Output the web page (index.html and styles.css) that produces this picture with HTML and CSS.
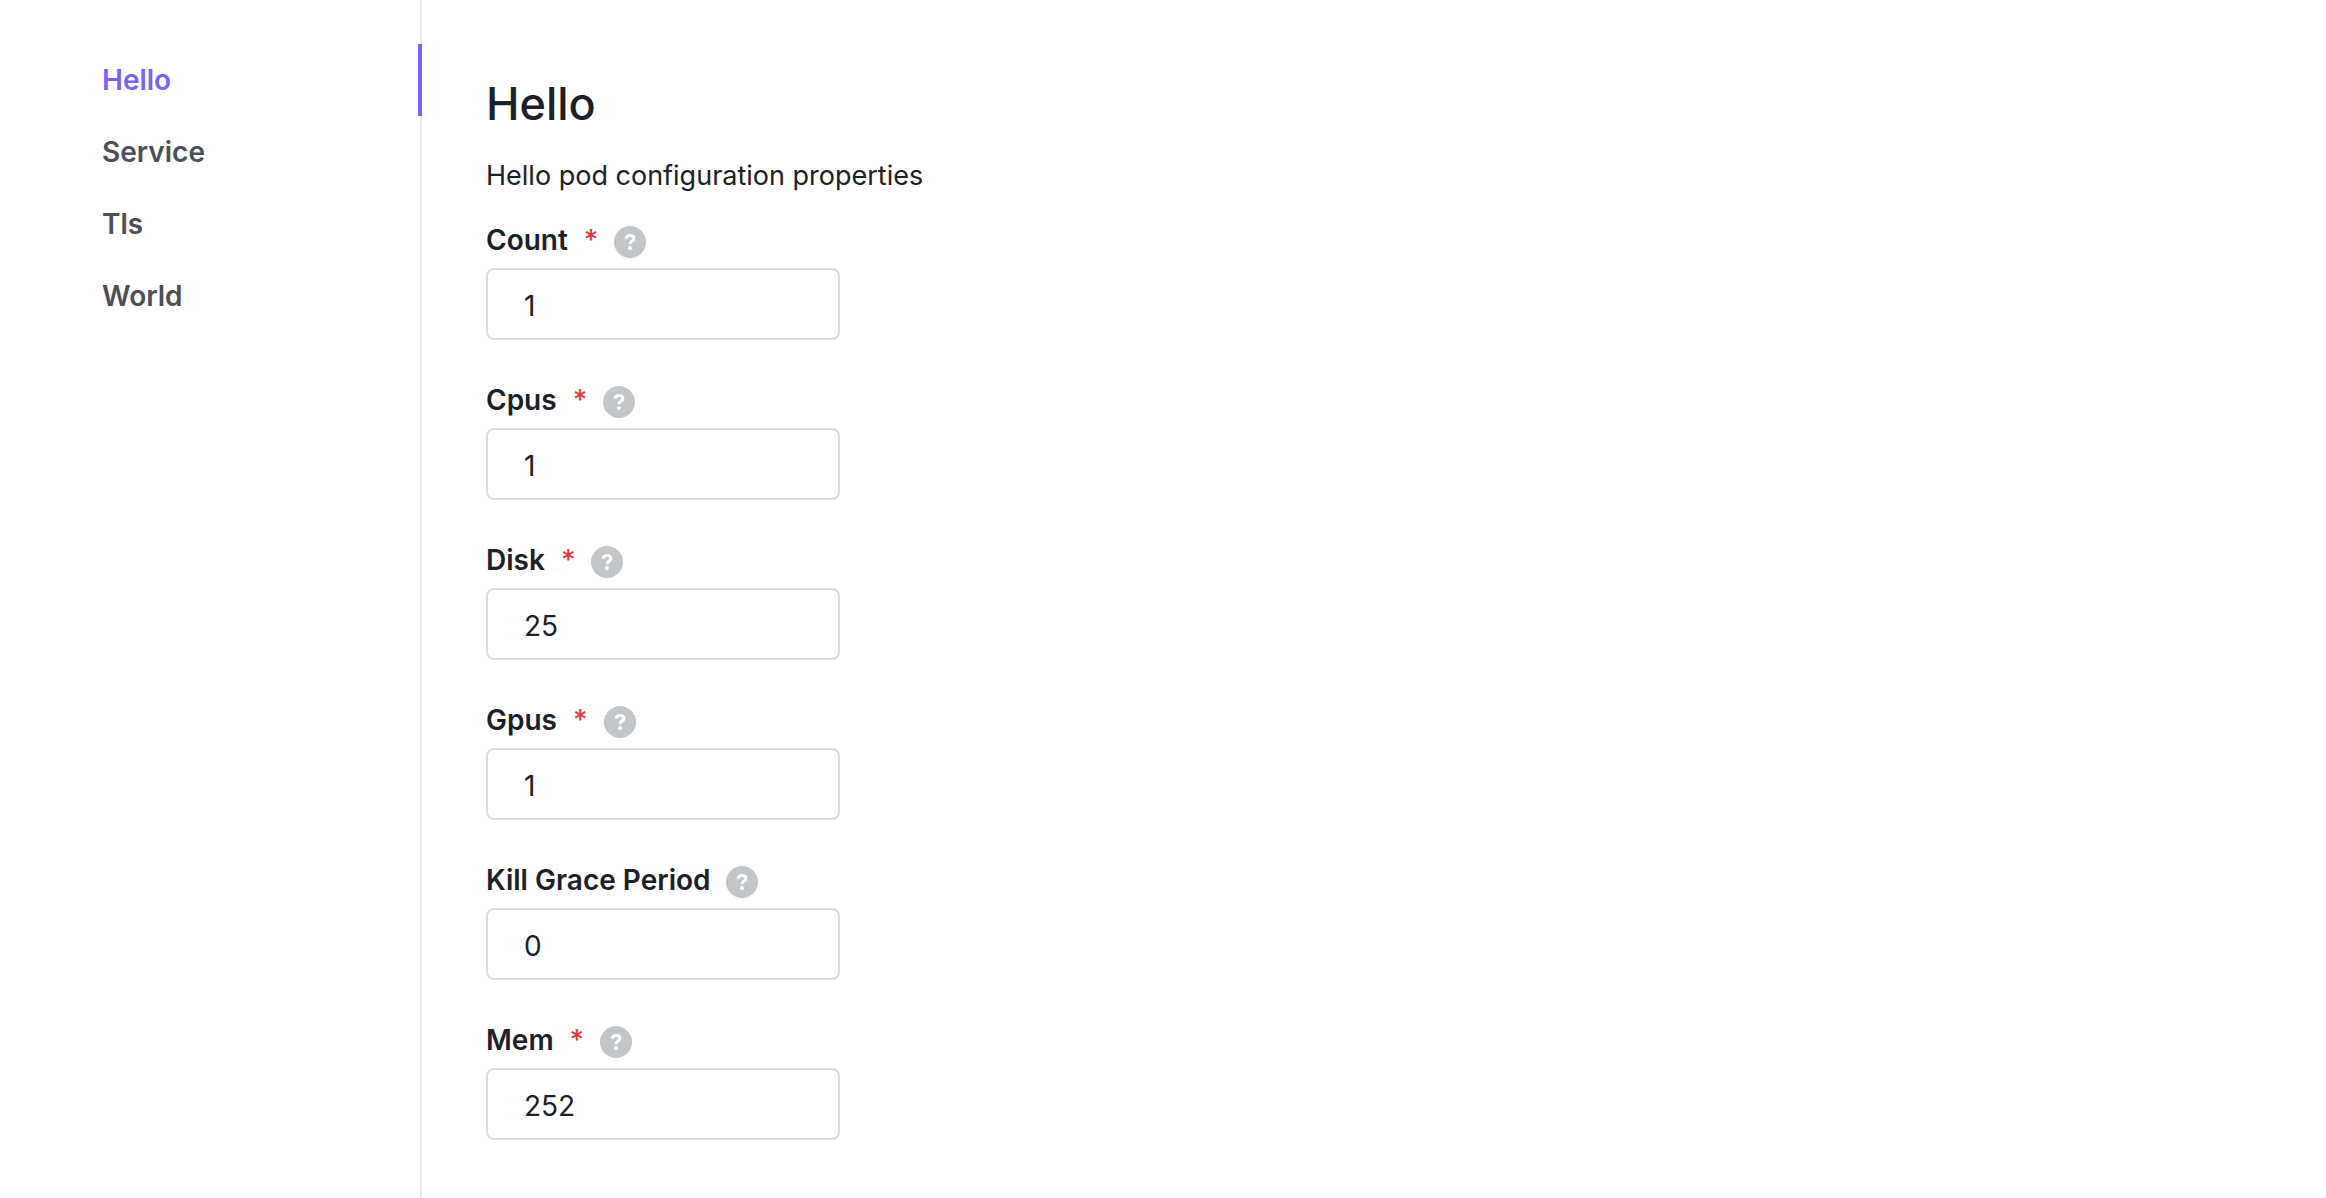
FILE: index.html
```html
<!DOCTYPE html>
<html lang="en">
<head>
<meta charset="utf-8">
<meta name="viewport" content="width=device-width, initial-scale=1">
<title>Hello</title>
<link rel="stylesheet" href="styles.css">
</head>
<body>
<svg class="sprite" aria-hidden="true">
  <symbol id="help" viewBox="0 0 32 32">
    <circle cx="16" cy="16" r="16" fill="#c3c6c9"/>
    <path d="M12.2 12.6C12.3 10.5 13.8 9.4 16.1 9.4C18.4 9.4 19.9 10.6 19.9 12.4C19.9 15.2 16 15 16 18.2" fill="none" stroke="#fff" stroke-width="3"/>
    <circle cx="16" cy="22.1" r="2" fill="#fff"/>
  </symbol>
</svg>
<div class="layout">
  <nav class="sidebar" aria-label="Configuration sections">
    <a class="tab tab-active" href="#hello" aria-current="page">Hello</a>
    <a class="tab" href="#service">Service</a>
    <a class="tab" href="#tls">Tls</a>
    <a class="tab" href="#world">World</a>
  </nav>
  <main class="content" id="hello">
    <h1 class="title">Hello</h1>
    <p class="description">Hello pod configuration properties</p>
    <form class="form">
      <div class="field">
        <div class="field-head"><label class="label" for="count">Count<span class="required">*</span></label><button class="help" type="button" aria-label="About Count"><svg class="help-icon"><use href="#help"/></svg></button></div>
        <input class="input" id="count" type="text" inputmode="numeric" value="1">
      </div>
      <div class="field">
        <div class="field-head"><label class="label" for="cpus">Cpus<span class="required">*</span></label><button class="help" type="button" aria-label="About Cpus"><svg class="help-icon"><use href="#help"/></svg></button></div>
        <input class="input" id="cpus" type="text" inputmode="numeric" value="1">
      </div>
      <div class="field">
        <div class="field-head"><label class="label" for="disk">Disk<span class="required">*</span></label><button class="help" type="button" aria-label="About Disk"><svg class="help-icon"><use href="#help"/></svg></button></div>
        <input class="input" id="disk" type="text" inputmode="numeric" value="25">
      </div>
      <div class="field">
        <div class="field-head"><label class="label" for="gpus">Gpus<span class="required">*</span></label><button class="help" type="button" aria-label="About Gpus"><svg class="help-icon"><use href="#help"/></svg></button></div>
        <input class="input" id="gpus" type="text" inputmode="numeric" value="1">
      </div>
      <div class="field">
        <div class="field-head"><label class="label" for="grace">Kill Grace Period</label><button class="help" type="button" aria-label="About Kill Grace Period"><svg class="help-icon"><use href="#help"/></svg></button></div>
        <input class="input" id="grace" type="text" inputmode="numeric" value="0">
      </div>
      <div class="field">
        <div class="field-head"><label class="label" for="mem">Mem<span class="required">*</span></label><button class="help" type="button" aria-label="About Mem"><svg class="help-icon"><use href="#help"/></svg></button></div>
        <input class="input" id="mem" type="text" inputmode="numeric" value="252">
      </div>
    </form>
  </main>
</div>
</body>
</html>
```
FILE: styles.css
```css
* {
  box-sizing: border-box;
}

body {
  margin: 0;
  background: #fff;
  color: #1b2029;
  font-family: Inter, "Liberation Sans", sans-serif;
  font-size: 28px;
  line-height: 40px;
}

.sprite {
  display: none;
}

.layout {
  display: flex;
  min-height: 100vh;
}

.sidebar {
  display: flex;
  flex: 0 0 422px;
  flex-direction: column;
  padding-top: 44px;
  box-shadow: inset -2px 0 #e8e8ea;
}

.tab {
  padding: 16px 24px 16px 102px;
  border-right: 4px solid transparent;
  color: #4b4f57;
  font-weight: 600;
  text-decoration: none;
}

.tab-active {
  border-right-color: #7b61f7;
  color: #7b61f7;
}

.content {
  flex: 1;
  min-width: 0;
  padding: 76px 64px 56px;
}

.title {
  margin: 0 0 24px;
  font-size: 45px;
  font-weight: 500;
  line-height: 56px;
}

.description {
  margin: 0 0 24px;
  font-size: 27px;
}

.form {
  display: flex;
  flex-direction: column;
  gap: 40px;
}

.field-head {
  display: flex;
  align-items: center;
  gap: 16px;
  margin-bottom: 8px;
}

.label {
  font-weight: 600;
}

.required {
  margin-left: 16px;
  color: #dd3a43;
  font-weight: 500;
}

.help {
  display: flex;
  padding: 4px 0 0;
  border: 0;
  background: none;
}

.help-icon {
  width: 32px;
  height: 32px;
}

.input {
  display: block;
  width: 100%;
  max-width: 354px;
  height: 72px;
  padding: 4px 36px 0;
  border: 2px solid #d9dce0;
  border-radius: 8px;
  background: #fff;
  color: inherit;
  font: inherit;
}
```
